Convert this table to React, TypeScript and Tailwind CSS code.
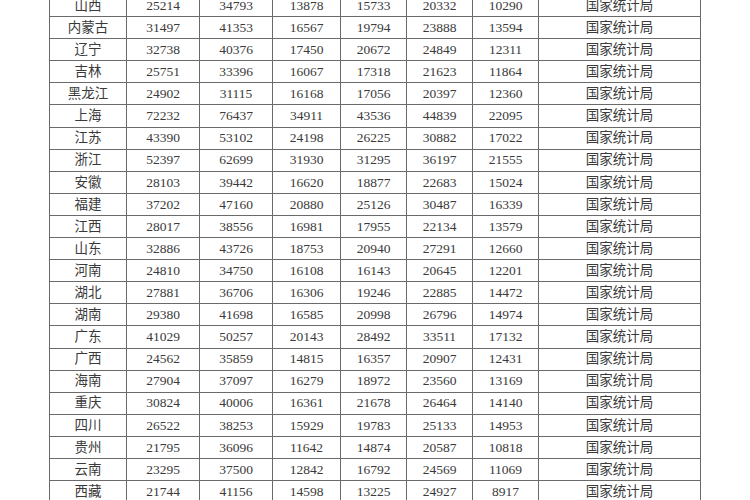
const rows: [string, ...number[]][] = [
  ['山西', 25214, 34793, 13878, 15733, 20332, 10290],
  ['内蒙古', 31497, 41353, 16567, 19794, 23888, 13594],
  ['辽宁', 32738, 40376, 17450, 20672, 24849, 12311],
  ['吉林', 25751, 33396, 16067, 17318, 21623, 11864],
  ['黑龙江', 24902, 31115, 16168, 17056, 20397, 12360],
  ['上海', 72232, 76437, 34911, 43536, 44839, 22095],
  ['江苏', 43390, 53102, 24198, 26225, 30882, 17022],
  ['浙江', 52397, 62699, 31930, 31295, 36197, 21555],
  ['安徽', 28103, 39442, 16620, 18877, 22683, 15024],
  ['福建', 37202, 47160, 20880, 25126, 30487, 16339],
  ['江西', 28017, 38556, 16981, 17955, 22134, 13579],
  ['山东', 32886, 43726, 18753, 20940, 27291, 12660],
  ['河南', 24810, 34750, 16108, 16143, 20645, 12201],
  ['湖北', 27881, 36706, 16306, 19246, 22885, 14472],
  ['湖南', 29380, 41698, 16585, 20998, 26796, 14974],
  ['广东', 41029, 50257, 20143, 28492, 33511, 17132],
  ['广西', 24562, 35859, 14815, 16357, 20907, 12431],
  ['海南', 27904, 37097, 16279, 18972, 23560, 13169],
  ['重庆', 30824, 40006, 16361, 21678, 26464, 14140],
  ['四川', 26522, 38253, 15929, 19783, 25133, 14953],
  ['贵州', 21795, 36096, 11642, 14874, 20587, 10818],
  ['云南', 23295, 37500, 12842, 16792, 24569, 11069],
  ['西藏', 21744, 41156, 14598, 13225, 24927, 8917],
];

const widths = ['w-[77px]', 'w-[73px]', 'w-[73px]', 'w-[68px]', 'w-[66px]', 'w-[66px]', 'w-[66px]', 'w-[162px]'];

export default function App() {
  return (
    <div className="w-[750px] h-[500px] overflow-hidden bg-white">
      <table
        className="ml-[49px] mt-[-6px] table-fixed border-collapse text-[13.5px] leading-none text-[#3a3a3a]"
        style={{ fontFamily: '"Liberation Serif", "Noto Sans CJK SC", serif' }}
      >
        <colgroup>
          {widths.map((w, i) => (
            <col key={i} className={w} />
          ))}
        </colgroup>
        <tbody>
          {rows.map((r) => (
            <tr key={r[0]} className="h-[22.1px]">
              {r.map((c, i) => (
                <td key={i} className="border-[1.5px] border-[#6a6a6a] p-0 text-center align-middle">
                  {c}
                </td>
              ))}
              <td className="border-[1.5px] border-[#6a6a6a] p-0 text-center align-middle">国家统计局</td>
            </tr>
          ))}
        </tbody>
      </table>
    </div>
  );
}
